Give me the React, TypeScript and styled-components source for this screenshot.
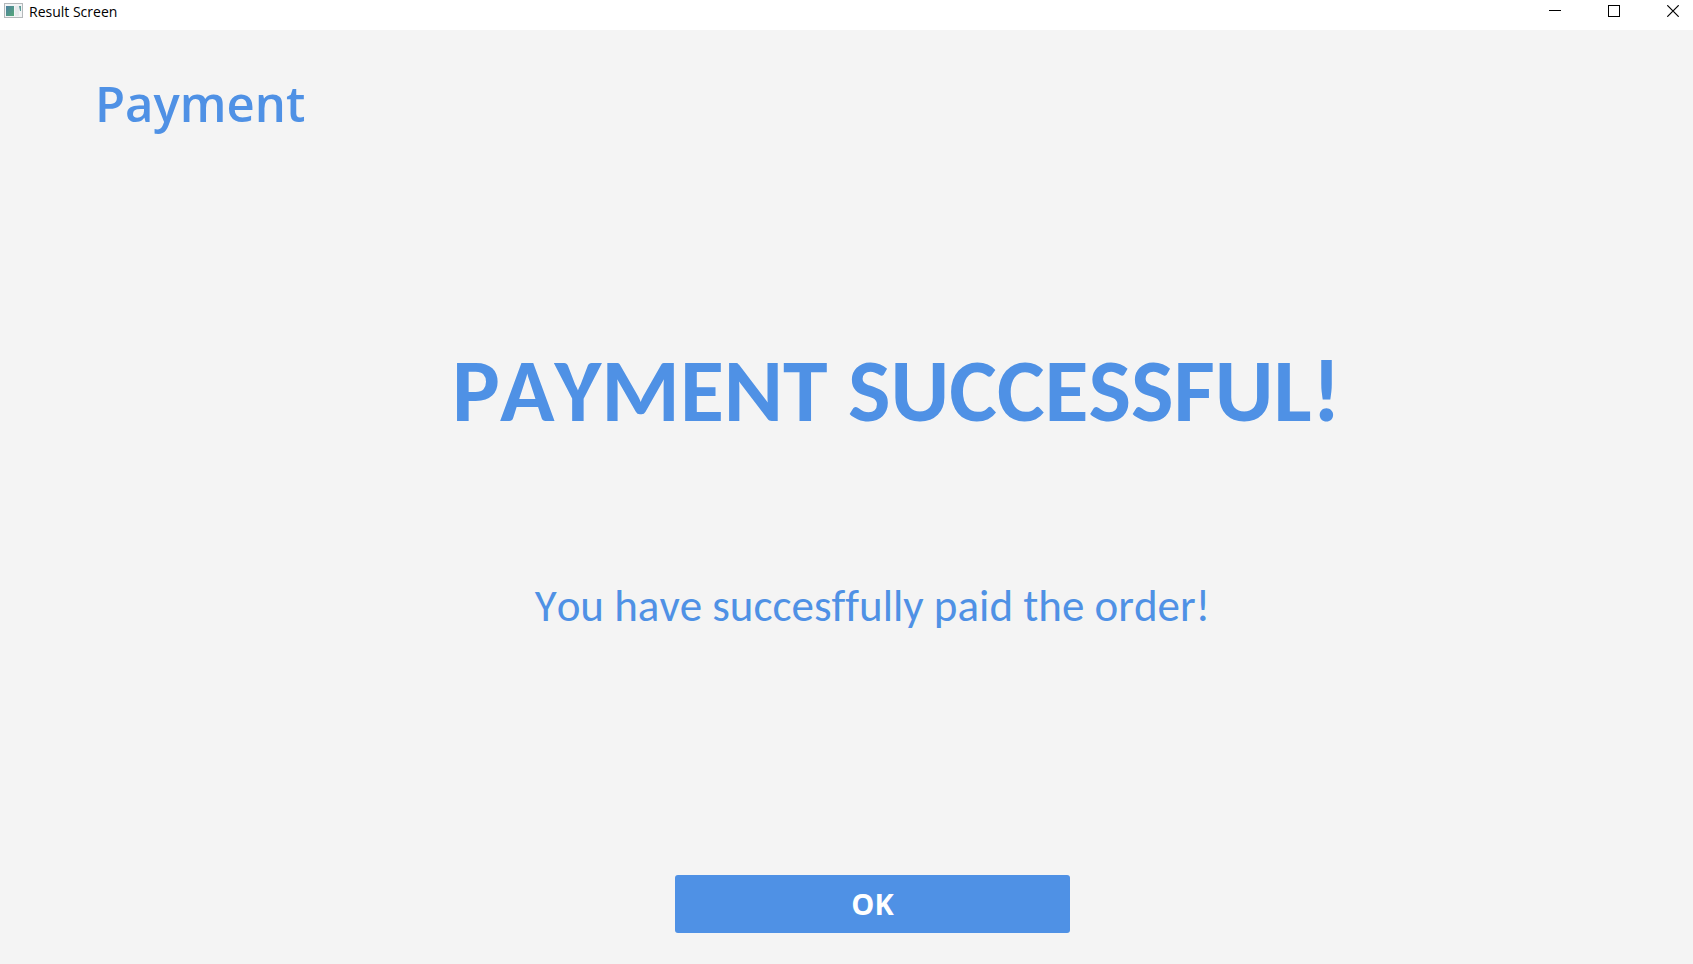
import React from "react";
import styled, { createGlobalStyle } from "styled-components";

const GlobalStyle = createGlobalStyle`
  *, *::before, *::after { box-sizing: border-box; }
  body { margin: 0; background: #f4f4f4; }
`;

const blue = "#4f91e5";
const uiFont = `"Segoe UI", "Open Sans", "Noto Sans", sans-serif`;
const messageFont = `Calibri, Carlito, Lato, sans-serif`;

const Window = styled.div`
  display: flex;
  flex-direction: column;
  min-height: 100vh;
  color: ${blue};
  font-family: ${uiFont};
`;

const TitleBar = styled.header`
  display: flex;
  align-items: flex-start;
  justify-content: space-between;
  height: 30px;
  padding-left: 4px;
  background: #ffffff;
  color: #000000;
`;

const WindowTitle = styled.div`
  display: flex;
  align-items: center;
  gap: 6px;
  font-size: 14px;
  line-height: 24px;

  svg {
    margin-bottom: 2px;
  }
`;

const WindowControls = styled.div`
  display: flex;
  gap: 19px;
`;

const ControlButton = styled.button`
  display: grid;
  place-items: center;
  width: 40px;
  height: 22px;
  padding: 0;
  border: 0;
  background: transparent;
  color: inherit;
`;

const Content = styled.main`
  display: flex;
  flex: 1;
  flex-direction: column;
  padding: 38px 0 31px;
`;

const PageTitle = styled.h1`
  margin: 0;
  padding-left: 95px;
  font-size: 49px;
  font-weight: 600;
  line-height: 70px;
`;

const Message = styled.section`
  display: flex;
  flex: 1;
  flex-direction: column;
  align-items: center;
  padding: 204px 0 0 52px;
  font-family: ${messageFont};
  font-kerning: none;
  font-variant-ligatures: none;
`;

const Result = styled.h2`
  margin: 0;
  padding-left: 48px;
  font-size: 90px;
  font-weight: 700;
  line-height: 96px;
`;

const Detail = styled.p`
  margin: 140px 0 40px;
  font-size: 45px;
  line-height: 56px;
`;

const OkButton = styled.button`
  width: 395px;
  max-width: 100%;
  height: 58px;
  margin-top: auto;
  padding: 0;
  border: 0;
  border-radius: 3px;
  background: ${blue};
  color: #ffffff;
  font-family: ${uiFont};
  font-size: 29px;
  font-weight: 700;
  line-height: 40px;
`;

const AppIcon = () => (
  <svg width="19" height="16" viewBox="0 0 19 16" aria-hidden="true">
    <defs>
      <linearGradient id="pane" x1="0" y1="0" x2="1" y2="1">
        <stop offset="0" stopColor="#4d80a0" />
        <stop offset="1" stopColor="#55a878" />
      </linearGradient>
    </defs>
    <rect x="0.5" y="0.5" width="18" height="14" fill="#f2f4f5" stroke="#b4b8ba" />
    <rect x="2" y="3" width="8" height="10" fill="url(#pane)" />
    <rect x="11" y="3" width="4" height="10" fill="#e6eaec" />
    <path d="M15 3h2v5h-1z" fill="#5c9c98" />
  </svg>
);

const App: React.FC = () => (
  <>
    <GlobalStyle />
    <Window>
      <TitleBar>
        <WindowTitle>
          <AppIcon />
          <span>Result Screen</span>
        </WindowTitle>
        <WindowControls>
          <ControlButton type="button" aria-label="Minimize">
            <svg width="12" height="12" viewBox="0 0 12 12">
              <path d="M0 5.5h12" stroke="currentColor" />
            </svg>
          </ControlButton>
          <ControlButton type="button" aria-label="Maximize">
            <svg width="12" height="12" viewBox="0 0 12 12">
              <rect x="0.5" y="0.5" width="11" height="11" fill="none" stroke="currentColor" />
            </svg>
          </ControlButton>
          <ControlButton type="button" aria-label="Close">
            <svg width="12" height="12" viewBox="0 0 12 12">
              <path d="M0.3 0.3l11.4 11.4M11.7 0.3L0.3 11.7" stroke="currentColor" strokeWidth="1.2" />
            </svg>
          </ControlButton>
        </WindowControls>
      </TitleBar>
      <Content>
        <PageTitle>Payment</PageTitle>
        <Message>
          <Result>PAYMENT SUCCESSFUL!</Result>
          <Detail>You have succesffully paid the order!</Detail>
          <OkButton type="button">OK</OkButton>
        </Message>
      </Content>
    </Window>
  </>
);

export default App;
